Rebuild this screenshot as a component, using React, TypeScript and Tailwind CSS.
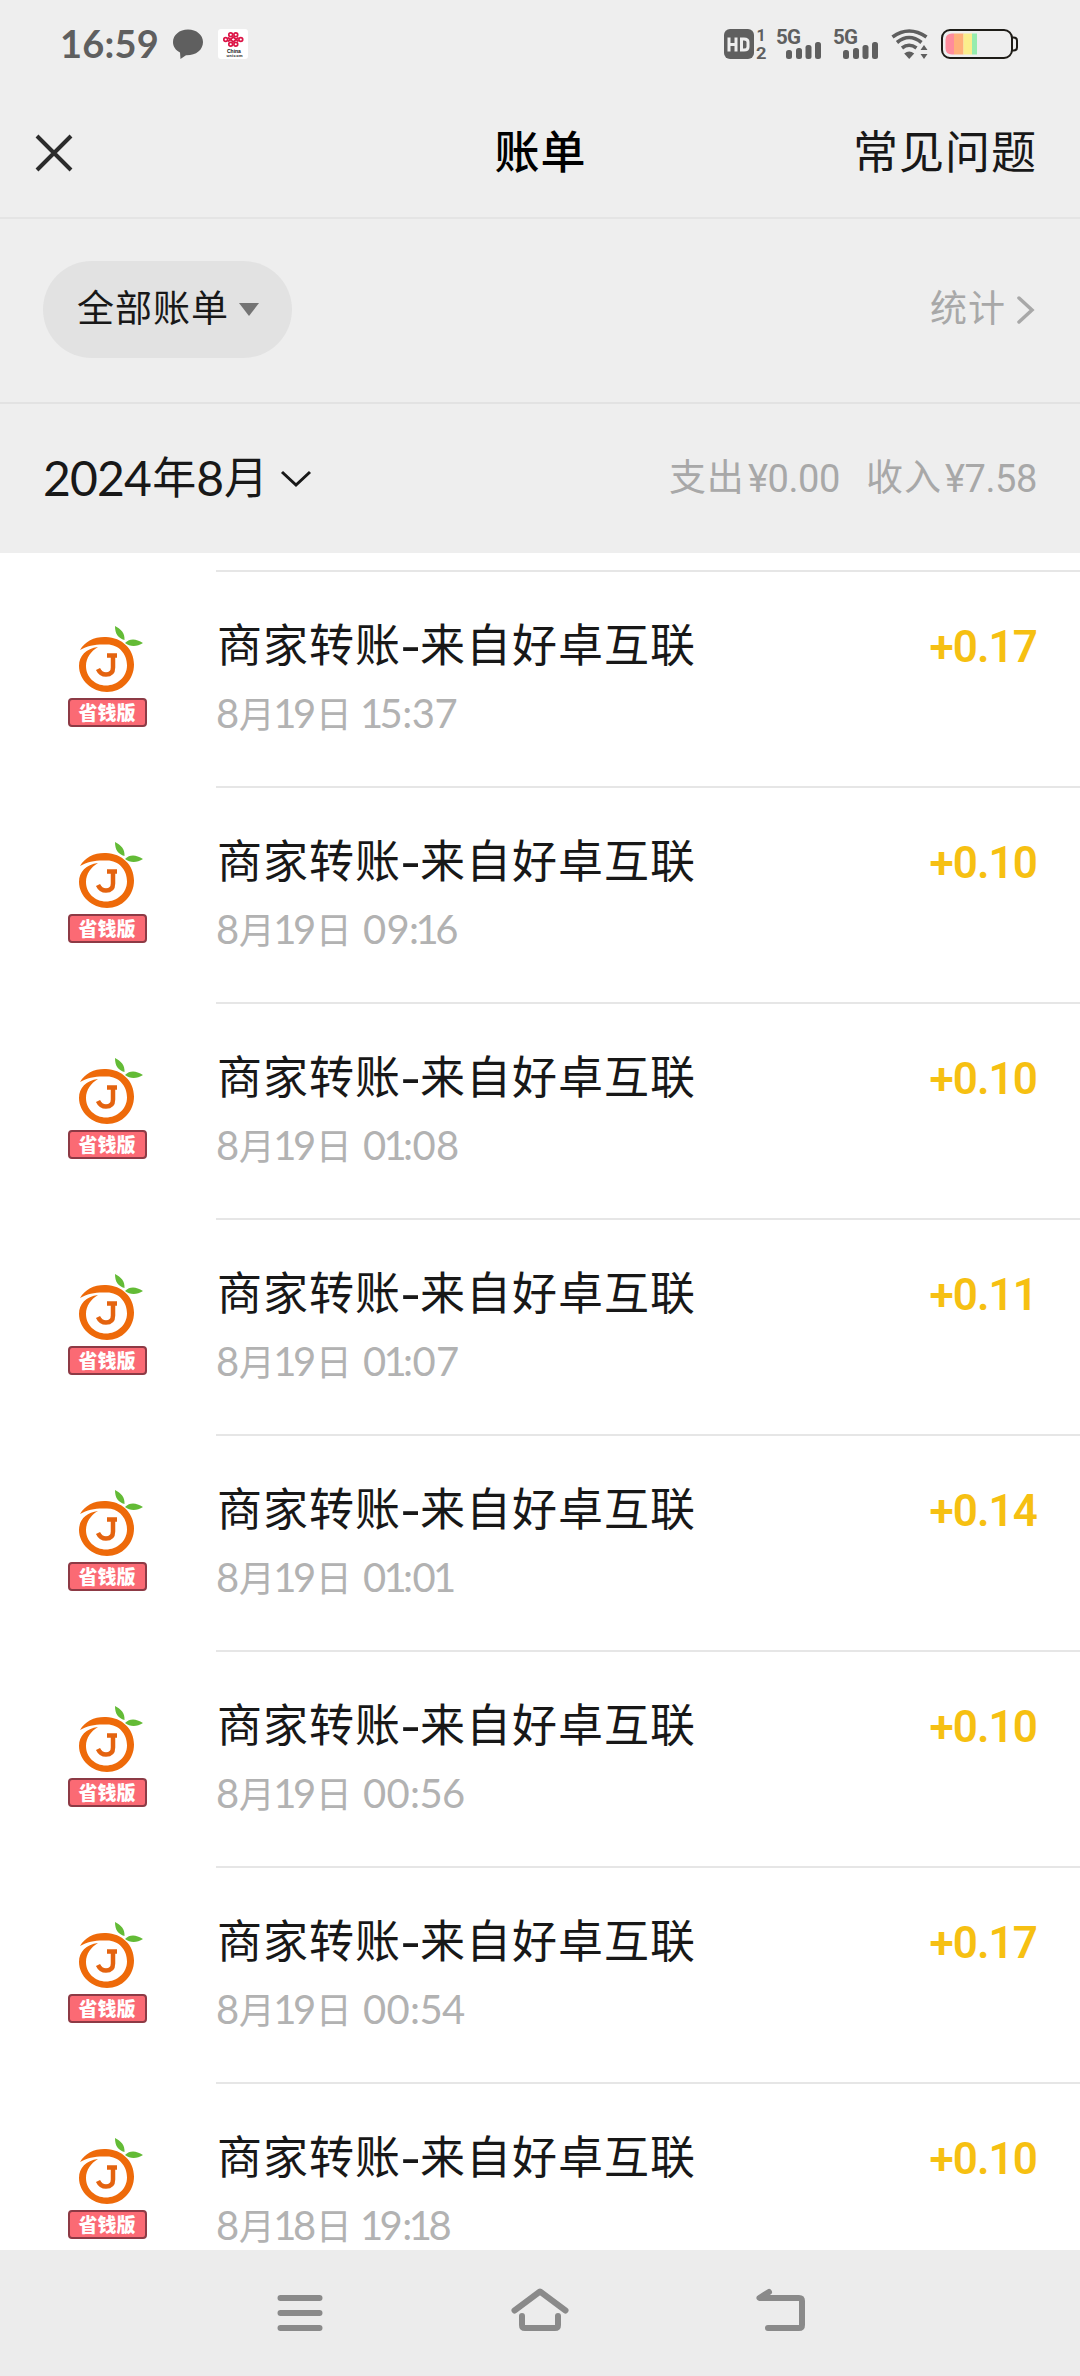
import type { ReactNode } from "react";

const rows = [
  ["8月19日 15:37", "+0.17"],
  ["8月19日 09:16", "+0.10"],
  ["8月19日 01:08", "+0.10"],
  ["8月19日 01:07", "+0.11"],
  ["8月19日 01:01", "+0.14"],
  ["8月19日 00:56", "+0.10"],
  ["8月19日 00:54", "+0.17"],
  ["8月18日 19:18", "+0.10"],
];

const cjk = "font-['Noto_Sans_CJK_SC',sans-serif]";

function Signal() {
  return (
    <svg className="overflow-visible" width="46" height="32" viewBox="0 0 46 32" fill="#5f5f5f">
      <text x="-1" y="15.500" fontFamily="Roboto, sans-serif" fontWeight="700" fontSize="20.5" textLength="25">5G</text>
      <rect x="9" y="22" width="6" height="9" rx="2.500" />
      <rect x="19" y="20" width="6" height="11" rx="2.500" />
      <rect x="28.500" y="17" width="6" height="14" rx="2.500" />
      <rect x="38" y="14" width="6" height="17" rx="2.500" />
    </svg>
  );
}

function StatusBar() {
  return (
    <div className="flex h-[88px] items-center pl-[60px] pr-[60px] text-[#5f5f5f]">
      <span className="-mt-[2px] w-[100px] font-[Lato,sans-serif] text-[38px] font-bold leading-none tracking-[0.2px]">16:59</span>
      <svg className="ml-[12px]" width="32" height="32" viewBox="0 0 32 32" fill="#5f5f5f">
        <path d="M16 1.500C7.500 1.500 1 7 1 14c0 4.500 2.600 8.300 7 10.500l.500 6.500 5.500-3.700c9.800.3 17-5.300 17-13.300C31 7 24.500 1.500 16 1.500z" />
      </svg>
      <svg className="ml-[13px] overflow-visible" width="32" height="32" viewBox="0 0 32 32">
        <rect x="1" y="1" width="30" height="30" rx="3" fill="#fff" />
        <g fill="none" stroke="#dc1446" strokeWidth="1.700">
          <circle cx="13.700" cy="6.700" r="1.900" />
          <circle cx="18.800" cy="6.700" r="1.900" />
          <circle cx="8.700" cy="11.500" r="1.900" />
          <circle cx="23.800" cy="11.500" r="1.900" />
          <circle cx="13.700" cy="16.300" r="1.900" />
          <circle cx="18.800" cy="16.300" r="1.900" />
          <path d="M11 9.500l5.300 4.500L21.500 9.500M11 13.500L16.300 9l5.200 4.500" />
        </g>
        <text x="10" y="24.500" fontFamily="Liberation Sans, sans-serif" fontWeight="700" fontSize="5" fill="#111">China</text>
        <text x="9.500" y="28.800" fontFamily="Liberation Sans, sans-serif" fontWeight="700" fontSize="4" textLength="16" fill="#111">unicom</text>
      </svg>
      <div className="ml-auto flex items-center">
        <svg className="overflow-visible" width="44" height="32" viewBox="0 0 44 32" fill="#5f5f5f">
          <rect x="1" y="1" width="30" height="30" rx="6" />
          <path d="M6 9.500v14M13 9.500v14M6 16.500h7M18.500 11h2.500q4 0 4 3v5q0 3-4 3h-2.500z" fill="none" stroke="#eee" strokeWidth="3" />
          <text x="33.500" y="12.500" fontFamily="Roboto, sans-serif" fontWeight="700" fontSize="16">1</text>
          <text x="33" y="31" fontFamily="Roboto, sans-serif" fontWeight="700" fontSize="16" textLength="10.500" lengthAdjust="spacingAndGlyphs">2</text>
        </svg>
        <span className="ml-[10px]"><Signal /></span>
        <span className="ml-[11px]"><Signal /></span>
        <svg className="ml-[10px]" width="40" height="32" viewBox="0 0 40 32" fill="none" stroke="#5f5f5f" strokeWidth="3.600">
          <path d="M2.500 9Q19 -3 36.500 9M7 14.500Q19 4.500 31.500 14.500M12 20Q19 14.500 26.500 20" />
          <path d="M19.200 31l-5-5.500q5-4 10 0z" fill="#5f5f5f" stroke="none" />
          <path d="M34 17l3.500 5h-7zM34 31l3.500-5h-7z" fill="#5f5f5f" stroke="none" />
        </svg>
        <svg className="ml-[10px]" width="80" height="32" viewBox="0 0 80 32">
          <path d="M14 5.500v21h-2q-6.500 0-6.500-6.500v-8q0-6.500 6.500-6.500z" fill="#ff8c9c" />
          <rect x="14" y="5.500" width="9.500" height="21" fill="#ffb07a" />
          <rect x="23.500" y="5.500" width="8.500" height="21" fill="#fbee8c" />
          <rect x="32" y="5.500" width="5" height="21" fill="#96ecae" />
          <rect x="2" y="2" width="70" height="28" rx="8" fill="none" stroke="#1e1c17" strokeWidth="2" />
          <path d="M72 9.500h1.500q3.500 0 3.500 3v7q0 3-3.500 3H72" fill="none" stroke="#1e1c17" strokeWidth="2" />
        </svg>
      </div>
    </div>
  );
}

function Logo() {
  return (
    <div className="flex w-[80px] flex-col items-center">
      <svg className="ml-[9px] overflow-visible" width="66" height="68" viewBox="0 0 66 68">
        <path fillRule="evenodd" fill="#ee6a0a" d="M1 24C6 15 16 10.500 27 11c16 .5 28 12 28 27.500S43 66 28 66 0 54 0 40c0-10 7-17.500 19-19C12 25 7 32 7 40c0 11 9 19.500 20 19.500S48 51 48 39.500 40 18.500 28 18.500C18 18 9 19 1 24z" />
        <path d="M34 29.500v12q0 7-7 7-5.500 0-8-5.500M28 29.500h10" fill="none" stroke="#e4630f" strokeWidth="4.500" />
        <path d="M36 0c6 3 10 7 9.500 14C39 12 36 8 36 0zM46 17c5-5 11-4.500 18 0-6 4-13 4-18 0z" fill="#63bb36" />
      </svg>
      <div className={`${cjk} mt-[4px] flex h-[29px] w-[79px] items-start justify-center rounded-[4px] border-2 border-[#8d3a45] bg-[#fb6a74] pt-[2px] text-[19px] font-black leading-[19px] text-white`}>省钱版</div>
    </div>
  );
}

function Numeric({ text }: { text: string }) {
  const out: ReactNode[] = [];
  text.split("").forEach((c, i) => {
    if (c === "1") out.push(<span key={i} className="mx-[-3px]">1</span>);
    else if (c === "月" || c === "日") out.push(<span key={i} className={`${cjk} text-[36px] tracking-[1.500px]`}>{c}</span>);
    else if (c === "0") out.push(<span key={i} className="tracking-[0.300px]">0</span>);
    else out.push(c);
  });
  return <>{out}</>;
}

export default function App() {
  return (
    <div className={`${cjk} flex h-[2376px] w-[1080px] flex-col overflow-hidden bg-white text-[#181818]`}>
      <header className="h-[219px] shrink-0 border-b-2 border-[#e4e4e4] bg-[#eeeeee]">
        <StatusBar />
        <div className="grid h-[130px] grid-cols-3 items-center pl-[34px] pr-[43px]">
          <svg width="40" height="40" viewBox="0 0 40 40" stroke="#2b2b2b" strokeWidth="4">
            <path d="M3 3l34 34M37 3L3 37" />
          </svg>
          <h1 className="-mt-[7px] pl-[10px] text-center text-[45px] font-medium leading-none tracking-[1px] text-black">账单</h1>
          <span className="-mt-[7px] text-right text-[45px] leading-none tracking-[1px]">常见问题</span>
        </div>
      </header>
      <section className="flex h-[185px] shrink-0 items-center justify-between border-b-2 border-[#e2e2e2] bg-[#eeeeee] pl-[43px] pr-[45px]">
        <button className="mb-[2px] flex h-[97px] w-[249px] items-center rounded-full bg-[#e2e2e2] pl-[34px] text-[37px] leading-none tracking-[1px]">
          <span className="-mt-[6px]">全部账单</span>
          <svg className="ml-[10px]" width="20" height="13" viewBox="0 0 20 13" fill="#747474"><path d="M0 0h20L10 13z" /></svg>
        </button>
        <div className="mb-[2px] flex items-center text-[37px] leading-none tracking-[1px] text-[#a8a8a8]">
          <span className="-mt-[6px]">统计</span>
          <svg className="ml-[11px]" width="18" height="30" viewBox="0 0 18 30" fill="none" stroke="#a8a8a8" strokeWidth="3.500" strokeLinecap="round"><path d="M2 3l13 12L2 27" /></svg>
        </div>
      </section>
      <section className="flex h-[149px] shrink-0 items-center justify-between bg-[#eeeeee] pl-[43px] pr-[43px]">
        <div className="flex items-center text-[44px] leading-none">
          <span className="-mt-[2px] font-[Lato,sans-serif] text-[48px] tracking-[-0.800px]">2024</span><span className="-mt-[7px] ml-[1px]">年</span><span className="-mt-[2px] font-[Lato,sans-serif] text-[48px]">8</span><span className="-mt-[7px]">月</span>
          <svg className="ml-[12px]" width="32" height="20" viewBox="0 0 32 20" fill="none" stroke="#181818" strokeWidth="3"><path d="M2 3l14 13L30 3" /></svg>
        </div>
        <div className="flex items-center text-[37px] leading-none text-[#a8a8a8]">
          <span className="-mt-[7px] tracking-[1px]">支出</span><span className="ml-[3px] font-[Roboto,sans-serif] text-[38px] tracking-[-0.400px]">¥0.00</span>
          <span className="-mt-[7px] ml-[26px] tracking-[1px]">收入</span><span className="ml-[3px] font-[Roboto,sans-serif] text-[38px] tracking-[-0.400px]">¥7.58</span>
        </div>
      </section>
      <main className="min-h-0 grow overflow-hidden pt-[17px]">
        {rows.map(([date, amount], i) => (
          <div key={i} className="flex h-[216px] pl-[67px]">
            <div className="w-[149px] pt-[56px]"><Logo /></div>
            <div className="flex grow justify-between border-t-2 border-[#e6e6e6] pr-[43px]">
              <div className="pt-[45px]">
                <div className="flex h-[50px] items-center whitespace-nowrap pl-[1px] text-[45px] leading-none tracking-[1px]">
                  商家转账<span className="w-[19px] origin-center scale-x-125 text-center font-medium tracking-normal">-</span>来自好卓互联
                </div>
                <div className="mt-[25px] h-[40px] whitespace-nowrap font-[Lato,sans-serif] text-[40px] leading-[40px] tracking-[-0.500px] text-[#b2b2b2]">
                  <Numeric text={date} />
                </div>
              </div>
              <div className="pt-[50px] font-[Roboto,sans-serif] text-[44px] font-semibold leading-[50px] tracking-[-0.900px] text-[#f6c012]">{amount}</div>
            </div>
          </div>
        ))}
      </main>
      <nav className="flex h-[126px] shrink-0 items-start justify-between bg-[#ececec] pl-[277px] pr-[275px] pt-[38px]">
        <svg className="mt-[7px]" width="46" height="36" viewBox="0 0 46 36" stroke="#8a8a8a" strokeWidth="6" strokeLinecap="round"><path d="M3.500 3h39M3.500 18h39M3.500 33h39" /></svg>
        <svg width="58" height="44" viewBox="0 0 58 44" fill="none" stroke="#8a8a8a" strokeWidth="6" strokeLinecap="round" strokeLinejoin="round"><path d="M3.500 22.500L29 3.500l25.500 19M11 28v9q0 3 3 3h30q3 0 3-3v-9" /></svg>
        <svg width="49" height="44" viewBox="0 0 49 44" fill="none" stroke="#8a8a8a" strokeWidth="6" strokeLinecap="round" strokeLinejoin="round"><path d="M13 4L3.500 10H43q3 0 3 3v24q0 3-3 3H12" /></svg>
      </nav>
    </div>
  );
}
